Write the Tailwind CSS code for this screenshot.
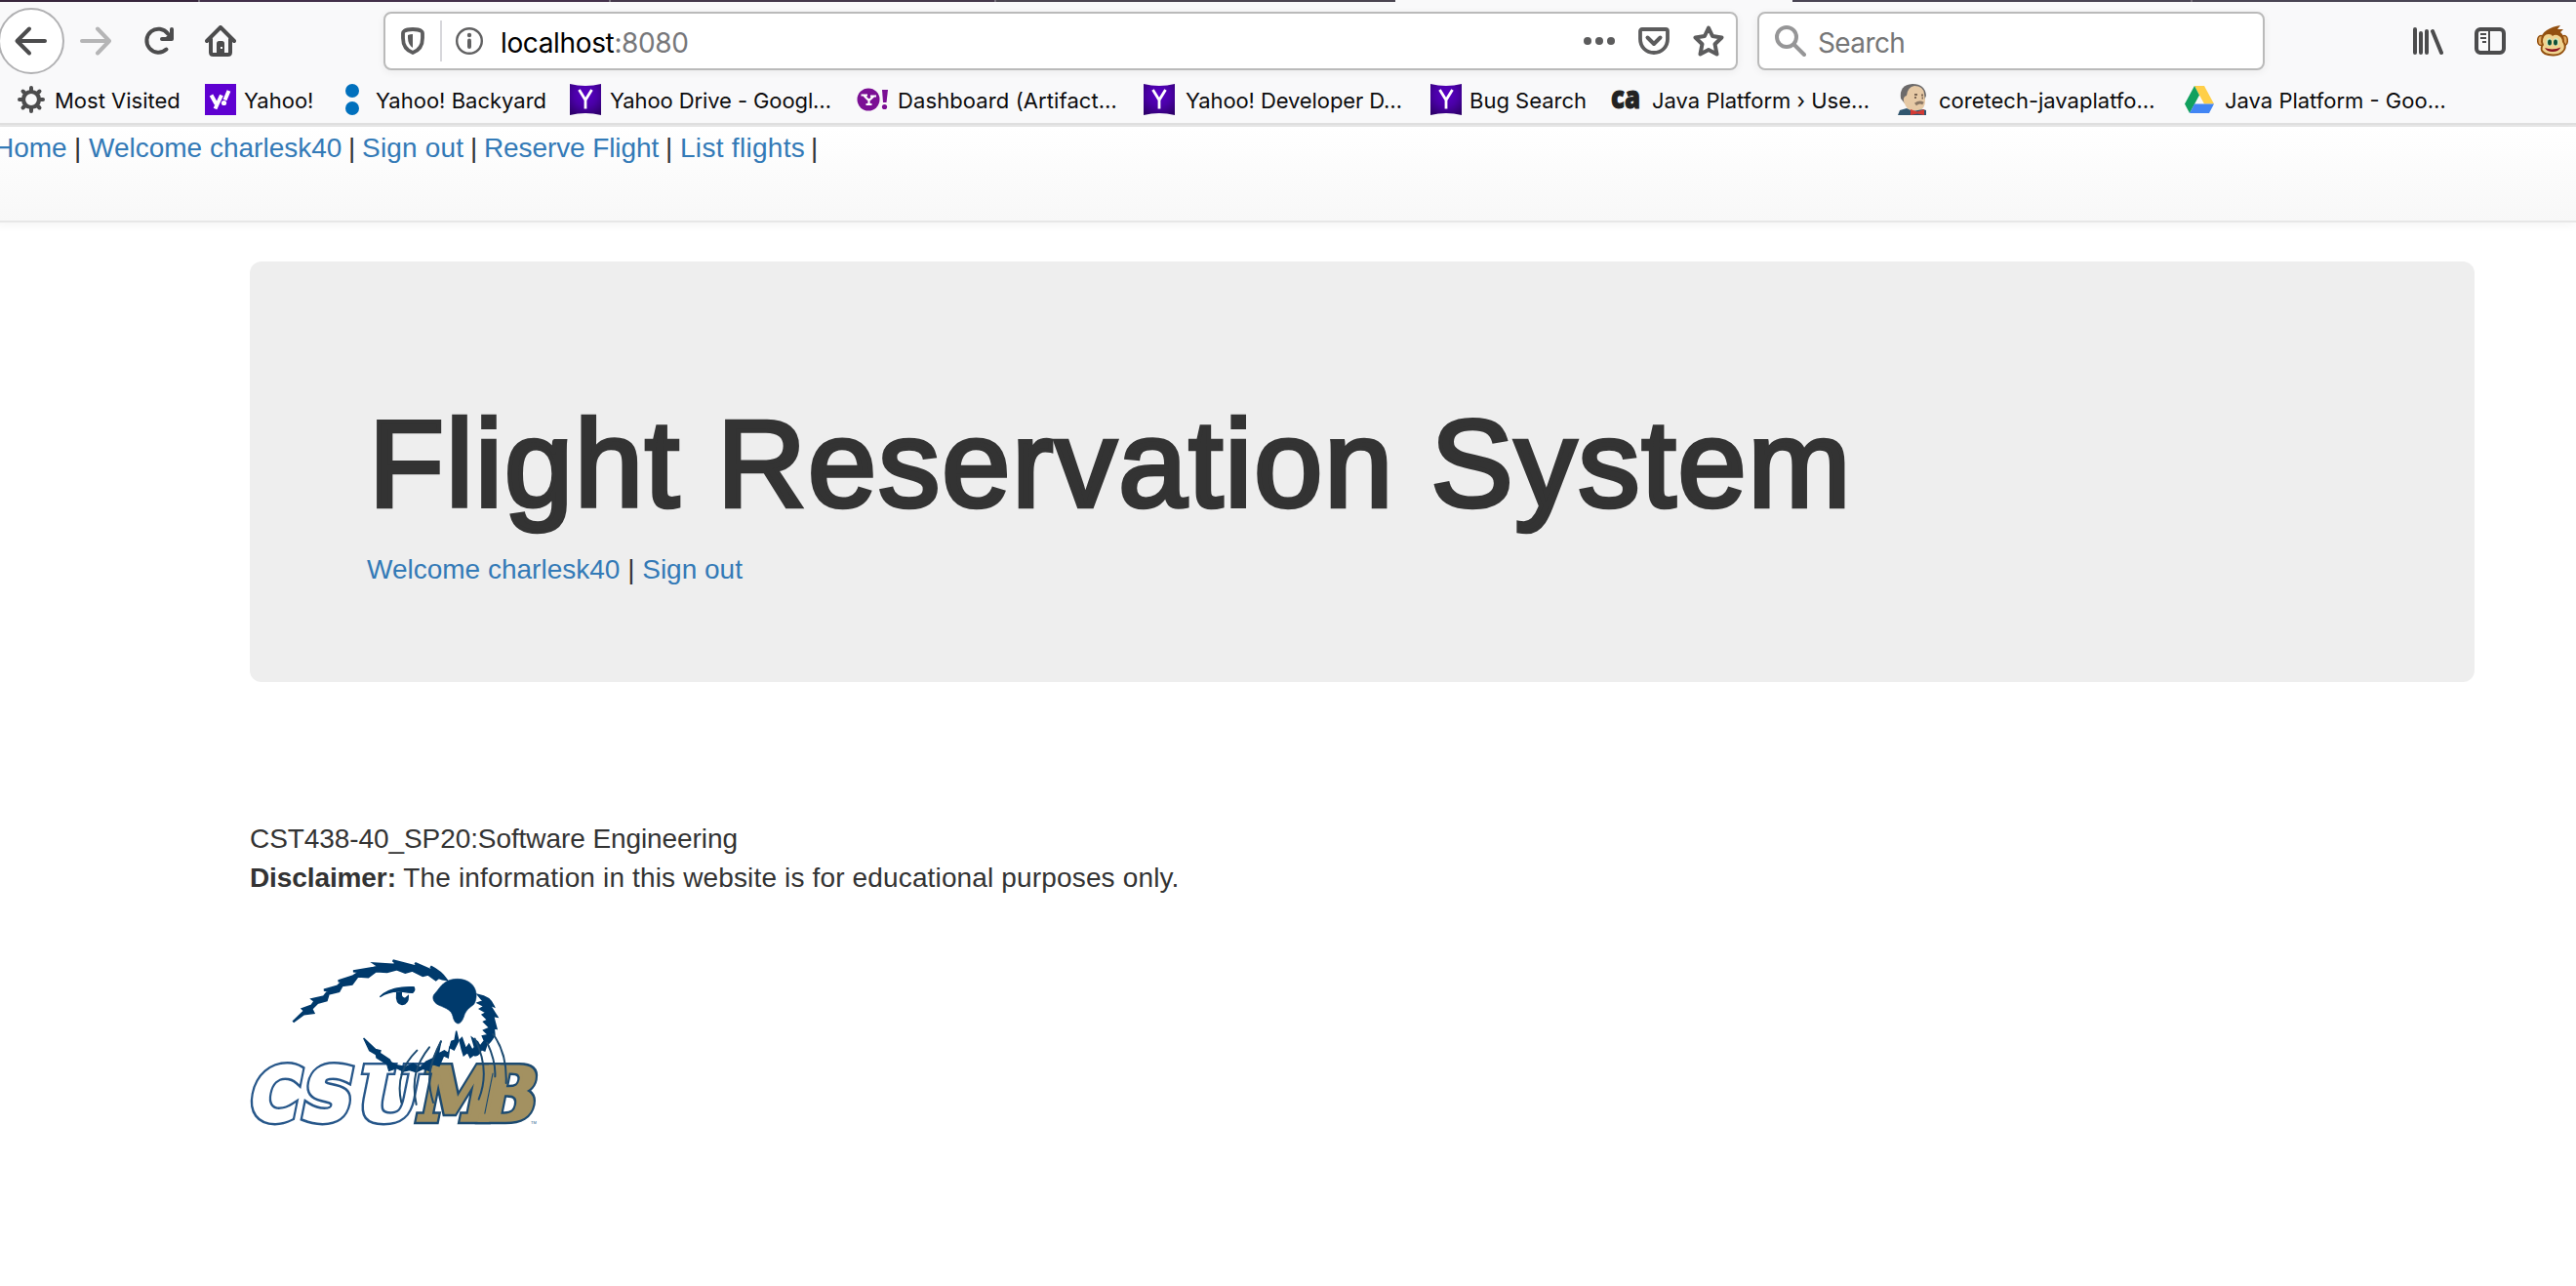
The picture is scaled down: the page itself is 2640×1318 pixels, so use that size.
<!DOCTYPE html>
<html lang="en">
<head>
<meta charset="utf-8">
<title>Flight Reservation System</title>
<script src="https://cdn.jsdelivr.net/npm/@tailwindcss/browser@4"></script>
</head>
<body class="w-[2640px] h-[1318px] overflow-hidden bg-white font-['Liberation_Sans',Arial,sans-serif] text-[28px] text-[#333]">

<!-- shared gradient and the purple Y bookmark icon -->
<svg width="0" height="0" class="absolute">
  <defs>
    <radialGradient id="yg" cx=".5" cy=".35" r=".75"><stop offset="0" stop-color="#5a00c8"/><stop offset=".5" stop-color="#4a00a6"/><stop offset="1" stop-color="#2d0068"/></radialGradient>
    <symbol id="y" viewBox="0 0 32 32"><path d="M0 0Q16 4 32 0V32Q16 28 0 32Z" fill="url(#yg)"/><path d="M9.500 6L16 16.500L22.500 6M16 16V25.500" fill="none" stroke="#fff" stroke-width="2.800"/></symbol>
  </defs>
</svg>

<header class="h-[126px] bg-[#f9f9fa] font-[Inter,sans-serif] text-[#0c0c0d]">
  <!-- bottom edge of the tab strip; the gap is the active tab -->
  <div class="flex h-[2px]">
    <div class="w-[203px] bg-[#38263c]"></div><div class="w-[2px] bg-[#77707c]"></div>
    <div class="w-[419px] bg-[#43304a]"></div><div class="w-[2px] bg-[#77707c]"></div>
    <div class="w-[393px] bg-[#45384b]"></div><div class="w-[2px] bg-[#77707c]"></div>
    <div class="w-[409px] bg-[#4b4551]"></div><div class="w-[407px]"></div>
    <div class="w-[408px] bg-[#4a4554]"></div><div class="w-[2px] bg-[#77707c]"></div>
    <div class="flex-1 bg-[#4a4554]"></div>
  </div>

  <!-- toolbar -->
  <div class="flex h-[80px] items-center">
    <svg class="-ml-[2px] shrink-0" width="68" height="68" viewBox="0 0 68 68"><circle cx="34" cy="34" r="33" fill="#fff" stroke="#b1b1b3" stroke-width="2"/><path d="M48 34H20M32 21.500L19.500 34L32 46.500" fill="none" stroke="#4c4c4d" stroke-width="4" stroke-linecap="round" stroke-linejoin="round"/></svg>
    <svg class="ml-4 shrink-0" width="32" height="32" viewBox="0 0 32 32" fill="none" stroke="#b5b5b6" stroke-width="4" stroke-linecap="round" stroke-linejoin="round"><path d="M2 16H29M18 3.500L30 16L18 28.500"/></svg>
    <svg class="ml-8 shrink-0" width="32" height="32" viewBox="0 0 32 32"><path d="M26 8.500A12 12 0 1 0 24.500 24.500" fill="none" stroke="#4c4c4d" stroke-width="4" stroke-linecap="round"/><path d="M30 4V14H20" fill="none" stroke="#4c4c4d" stroke-width="4" stroke-linecap="round" stroke-linejoin="round"/><path d="M30 6V14H22Z" fill="#4c4c4d"/></svg>
    <svg class="ml-8 shrink-0" width="32" height="32" viewBox="0 0 32 32"><path d="M2 16L16 2L30 16M6 14V27.500Q6 30 8.500 30H23.500Q26 30 26 27.500V14" fill="none" stroke="#4c4c4d" stroke-width="4" stroke-linecap="round" stroke-linejoin="round"/><path d="M12 30V18.500Q12 16 14.500 16H17.500Q20 16 20 18.500V30Z" fill="#4c4c4d"/><rect x="16" y="22" width="2" height="2" fill="#f9f9fa"/></svg>

    <!-- address bar -->
    <div class="ml-[151px] flex h-[60px] w-[1388px] shrink-0 items-center rounded-lg border-2 border-[#bababa] bg-white shadow-[0_2px_8px_rgba(0,0,0,0.06)]">
      <svg class="ml-4 shrink-0" width="24" height="28" viewBox="0 0 24 28"><path d="M12 2C8.500 2 5 2.600 3 4C2.200 4.500 2 5 2 6V11C2 19 6.500 24 12 26C17.500 24 22 19 22 11V6C22 5 21.800 4.500 21 4C19 2.600 15.500 2 12 2Z" fill="none" stroke="#5c5c5d" stroke-width="3.800"/><path d="M12 7V21C9 19 7 15.500 7 11V8Q9 7 12 7Z" fill="#5c5c5d"/></svg>
      <div class="ml-4 h-[42px] w-[2px] bg-[#d7d7db]"></div>
      <svg class="ml-[14px] shrink-0" width="28" height="28" viewBox="0 0 28 28"><circle cx="14" cy="14" r="12.800" fill="none" stroke="#616162" stroke-width="2.400"/><circle cx="14" cy="8" r="2.200" fill="#616162"/><path d="M14 13.500V20" stroke="#616162" stroke-width="4" stroke-linecap="round"/></svg>
      <div class="ml-[18px] mt-[3px] text-[28px] leading-none tracking-[-0.36px] text-black">localhost<span class="text-[#77777a]">:8080</span></div>
      <svg class="ml-auto shrink-0" width="32" height="32" viewBox="0 0 32 32" fill="#5c5c5d"><circle cx="4" cy="16" r="4"/><circle cx="16" cy="16" r="4"/><circle cx="28" cy="16" r="4"/></svg>
      <svg class="ml-6 shrink-0" width="32" height="28" viewBox="0 0 32 28" fill="none" stroke="#5c5c5d" stroke-width="3.800" stroke-linecap="round" stroke-linejoin="round"><path d="M4 2H28Q30 2 30 4V12C30 20 24 26 16 26C8 26 2 20 2 12V4Q2 2 4 2Z"/><path d="M9.500 10.500L16 17L22.500 10.500" stroke-width="4"/></svg>
      <svg class="ml-6 mr-3 shrink-0" width="32" height="32" viewBox="0 0 32 32"><path d="M16 2.500L20 11L29.500 12.500L22.500 19.200L24.500 29.500L16 25L7.500 29.500L9.500 19.200L2.500 12.500L12 11Z" fill="none" stroke="#5c5c5d" stroke-width="4" stroke-linejoin="round"/></svg>
    </div>

    <!-- search box -->
    <div class="ml-5 flex h-[60px] w-[520px] shrink-0 items-center rounded-lg border-2 border-[#bababa] bg-white shadow-[0_2px_8px_rgba(0,0,0,0.06)]">
      <svg class="ml-4 shrink-0" width="32" height="32" viewBox="0 0 32 32" fill="none" stroke="#969697" stroke-width="4" stroke-linecap="round"><circle cx="12" cy="12" r="10"/><path d="M20 20L30 30"/></svg>
      <div class="ml-[12px] mt-[3px] text-[28px] leading-none tracking-[-0.6px] text-[#767677]">Search</div>
    </div>

    <svg class="ml-[151px] shrink-0" width="32" height="28" viewBox="0 0 32 28" stroke="#4c4c4d" stroke-width="4" stroke-linecap="round"><path d="M3 2V26M9 6V26M15 4V26M21 4L30 26"/></svg>
    <svg class="ml-[32px] shrink-0" width="32" height="28" viewBox="0 0 32 28"><rect x="2" y="2" width="28" height="24" rx="4" fill="none" stroke="#4c4c4d" stroke-width="4"/><path d="M15 3V25M6 7H12M6 11H12M8 15H12" stroke="#4c4c4d" stroke-width="2"/></svg>
    <svg class="ml-8 shrink-0" width="32" height="32" viewBox="0 0 32 32"><ellipse cx="4" cy="15.500" rx="3.300" ry="5" fill="#e0a860" stroke="#93500f" stroke-width="1.600"/><ellipse cx="28" cy="15.500" rx="3.300" ry="5" fill="#e0a860" stroke="#93500f" stroke-width="1.600"/><path d="M4 17Q4 8 10 5Q16 1 24 0L21 4L27 4L24 7Q28 10 28 17Q31 20 29 25Q25 32 16 31.500Q6 31 4 26Q3 22 5 20Z" fill="#93500f"/><path d="M6 17Q6 9 12 9Q15 9 16 11Q18 9 21 10Q26 12 26 17Q29 21 27 25Q23 30 16 29.500Q8 29 5.500 25Q5 22 7 20Z" fill="#f0d490"/><ellipse cx="12.500" cy="17" rx="2.800" ry="4" fill="#cfe8c0"/><ellipse cx="19.500" cy="17" rx="2.800" ry="4" fill="#cfe8c0"/><ellipse cx="13" cy="17.500" rx="2" ry="3" fill="#0e5136"/><ellipse cx="19" cy="17.500" rx="2" ry="3" fill="#0e5136"/><path d="M8 23Q16 26 24.500 22.500Q22 27 16 27Q10 27 8 23Z" fill="#8b1420"/></svg>
  </div>

  <!-- bookmarks -->
  <nav class="flex h-[40px] items-center pl-4 text-[22px] leading-[28px] whitespace-nowrap [&_span]:pt-[2px]">
    <div class="flex w-[194px] items-center gap-[8px]"><svg class="shrink-0" width="32" height="32" viewBox="0 0 32 32" stroke="#4c4c4d" fill="none"><circle cx="16" cy="16" r="8" stroke-width="4.200"/><path d="M16 4V7M16 25V28M4 16H7M25 16H28M7.500 7.500L9.500 9.500M22.500 22.500L24.500 24.500M7.500 24.500L9.500 22.500M22.500 9.500L24.500 7.500" stroke-width="4" stroke-linecap="round"/></svg><span>Most Visited</span></div>
    <div class="flex w-[135px] items-center gap-[8px]"><svg class="shrink-0" width="32" height="32" viewBox="0 0 32 32"><rect width="32" height="32" fill="#5f01d1"/><path d="M6.500 11.500L11.500 20.500M17 11.500L10.500 25.500M24.500 7L20.500 16.500" fill="none" stroke="#fff" stroke-width="4"/><circle cx="19.500" cy="19.500" r="2.600" fill="#fff"/></svg><span>Yahoo!</span></div>
    <div class="flex w-[239px] items-center gap-[8px]"><svg class="shrink-0" width="32" height="32" viewBox="0 0 32 32" fill="#0070bd"><circle cx="16" cy="7" r="7"/><circle cx="16" cy="25" r="7"/></svg><span>Yahoo! Backyard</span></div>
    <div class="flex w-[294px] items-center gap-[9px]"><svg class="shrink-0" width="32" height="32"><use href="#y"/></svg><span class="tracking-[-0.1px]">Yahoo Drive - Googl…</span></div>
    <div class="flex w-[294px] items-center gap-[10px]"><svg class="shrink-0" width="32" height="32" viewBox="0 0 32 32"><circle cx="12" cy="16" r="11.500" fill="#7b0f94"/><path d="M4.500 11.500H11M14 12.500H20M7.500 12L12.500 17L17.500 12.500M12.500 16.500V20.500M9.500 21H15.500" fill="none" stroke="#fff" stroke-width="2.200"/><path d="M26 6H32L30.500 19H27Z" fill="#7b0f94"/><circle cx="28.500" cy="23.500" r="2.600" fill="#7b0f94"/></svg><span class="tracking-[0.1px]">Dashboard (Artifact…</span></div>
    <div class="flex w-[294px] items-center gap-[11px]"><svg class="shrink-0" width="32" height="32"><use href="#y"/></svg><span class="tracking-[-0.1px]">Yahoo! Developer D…</span></div>
    <div class="flex w-[184px] items-center gap-[8px]"><svg class="shrink-0" width="32" height="32"><use href="#y"/></svg><span>Bug Search</span></div>
    <div class="flex w-[295px] items-center gap-[11px]"><svg class="shrink-0 overflow-visible" width="32" height="32" viewBox="0 0 32 32"><text x="1" y="25" font-family="Open Sans" font-weight="800" font-size="32" textLength="30" lengthAdjust="spacingAndGlyphs" fill="#222" stroke="#222" stroke-width="1">ca</text></svg><span>Java Platform › Use…</span></div>
    <div class="flex w-[293px] items-center gap-[10px]"><svg class="shrink-0" width="32" height="32" viewBox="0 0 32 32"><path d="M3 15Q1 1 15 0Q28 0 29 12L27 17L7 20Z" fill="#6c6a6a"/><path d="M9 12Q10 3 17 2Q26 2 27 10L28 17Q28 26 21 28L11 27Q7 22 6 18Q5 13 9 12Z" fill="#e6c9a5"/><path d="M17 11H20M24 11.500H26M17 14H19M24.500 14.500H26" stroke="#7b6552" stroke-width="1.800"/><path d="M18 21Q22 17.500 26 20" stroke="#8b7865" stroke-width="3" fill="none"/><path d="M0 32L2 27L9 25L15 28L26 26L29 27V32Z" fill="#31566f"/><path d="M13 26L20 28.500L27 26V32L20 30.500L13 32Z" fill="#d33a34"/></svg><span>coretech-javaplatfo…</span></div>
    <div class="flex items-center gap-[10px]"><svg class="shrink-0" width="32" height="32" viewBox="0 0 32 32"><path d="M11 2H21L31 20.500H21Z" fill="#ffcf48"/><path d="M11 2L16 11.500L6 30L1 20.500Z" fill="#11a05e"/><path d="M11 20.500H31L26 30H6Z" fill="#4285f4"/></svg><span>Java Platform - Goo…</span></div>
  </nav>
</header>
<div class="h-[4px] border-t-2 border-[#e0e0e0] bg-[#e9e9e9]"></div>

<!-- page navigation, scrolled slightly past the left edge -->
<nav class="-ml-[6px] h-[98px] border-b-2 border-[#e7e7e7] bg-linear-to-b from-white to-[#f8f8f8] pt-[2px] leading-[40px] whitespace-nowrap shadow-[0_2px_10px_rgba(0,0,0,0.05)]">
  <div class="flex">
    <a class="w-[82px] text-[#337ab7]">Home</a><span class="w-[15px]">|</span>
    <a class="w-[266px] text-[#337ab7]">Welcome charlesk40</a><span class="w-[14px]">|</span>
    <a class="w-[111px] tracking-[0.2px] text-[#337ab7]">Sign out</a><span class="w-[14px]">|</span>
    <a class="w-[186px] tracking-[-0.1px] text-[#337ab7]">Reserve Flight</a><span class="w-[15px]">|</span>
    <a class="w-[134px] tracking-[0.3px] text-[#337ab7]">List flights</a><span>|</span>
  </div>
</nav>

<main class="mt-10 ml-64 w-[2280px]">
  <section class="h-[431px] rounded-xl bg-[#eee] px-[120px] pt-[138px]">
    <h1 class="ml-[2px] h-[150px] text-[126px] leading-[139px] tracking-[2px] whitespace-nowrap [-webkit-text-stroke:4.500px_#333]">Flight Reservation System</h1>
    <p class="mt-[8px] leading-[40px]"><a class="text-[#337ab7]">Welcome charlesk40</a> | <a class="text-[#337ab7]">Sign out</a></p>
  </section>
  <footer class="mt-[141px] leading-[40px] whitespace-nowrap">
    <p class="tracking-[-0.080px]">CST438-40_SP20:Software Engineering</p>
    <p class="tracking-[0.150px]"><b class="tracking-[-0.100px]">Disclaimer:</b> The information in this website is for educational purposes only.</p>
    <svg class="mt-[64px] overflow-visible" width="300" height="170" viewBox="48 72 900 510">
      <!-- each letter is laid down twice: a wide outline, then a narrower fill over it -->
      <g font-weight="bold" font-size="225" stroke-linejoin="miter">
        <g font-family="DejaVu Sans">
          <text transform="matrix(.9 0 -.2 1 38 563)" fill="#27578a" stroke="#27578a" stroke-width="26">C</text>
          <text transform="matrix(.9 0 -.2 1 38 563)" fill="#fff" stroke="#fff" stroke-width="11">C</text>
          <text transform="matrix(.95 0 -.2 1 198 563)" fill="#27578a" stroke="#27578a" stroke-width="26">S</text>
          <text transform="matrix(.95 0 -.2 1 198 563)" fill="#fff" stroke="#fff" stroke-width="11">S</text>
        </g>
        <g font-family="DejaVu Serif">
          <text transform="matrix(.97 0 -.2 1 366 563)" fill="#27578a" stroke="#27578a" stroke-width="26">U</text>
          <text transform="matrix(.97 0 -.2 1 366 563)" fill="#fff" stroke="#fff" stroke-width="11">U</text>
          <text transform="matrix(.93 0 -.2 1 557 563)" fill="#1c4a70" stroke="#1c4a70" stroke-width="26">M</text>
          <text transform="matrix(.9 0 -.2 1 745 563)" fill="#1c4a70" stroke="#1c4a70" stroke-width="26">B</text>
          <text transform="matrix(.93 0 -.2 1 557 563)" fill="#a39161" stroke="#a39161" stroke-width="11">M</text>
          <text transform="matrix(.9 0 -.2 1 745 563)" fill="#a39161" stroke="#a39161" stroke-width="11">B</text>
        </g>
      </g>
      <text x="912" y="577" font-size="12" fill="#27578a" font-family="Liberation Sans">TM</text>
      <g fill="#003a6c" stroke="#003a6c" stroke-width="2">
        <path stroke-width="7" d="M181 262L216 228L210 222L238 212L248 198L240 192L276 184L290 166L276 164L318 152L332 138L320 136L364 122L386 108L366 106L428 96L444 92L430 82L488 86L500 84L488 73L560 92L566 92L556 81L604 102L614 104L604 92Q636 108 652 132L640 130L628 126L620 133L596 116L580 120L548 104L526 110L500 100L470 108L436 106L412 124L380 122L362 146L332 150L322 168L290 176L284 196L256 204L238 222L244 234L214 238Z"/>
        <path d="M648 141C668 126 706 126 727 143C748 160 748 190 737 208C722 220 712 226 706 246Q698 268 687 267Q676 264 672 244C668 226 652 220 630 211C610 202 608 184 616 176C628 164 634 150 648 141Z"/>
        <path stroke-width="4" d="M448 185Q480 152 552 155Q558 166 548 172Q534 172 520 169Q480 164 448 185Z"/>
        <path stroke-width="4" d="M500 172Q496 206 516 209Q536 206 535 182L526 190Q512 188 514 172Z"/>
        <path stroke-width="6" d="M750 179Q786 184 798 214L784 208L808 246L796 244L806 282L798 280L800 302Q788 324 776 332L770 350L760 346Q748 372 736 362L726 370L718 354L706 364L700 344L694 318L700 312L712 346L722 332L732 350L740 340L732 312L748 324L756 338L770 320L764 306L782 302L768 288L786 280L768 262L780 256L764 240L776 234L756 222L770 214L750 204L766 198Z"/>
        <path stroke-width="4" d="M398 312L434 346L450 350L448 358L478 378L482 386L502 396L528 400L550 390L572 402L590 384L612 374L636 320L628 360L646 350L658 358L668 322L678 318L683 290L690 320L676 348L662 340L658 372L644 366L630 398L610 392L600 412L580 406L560 416L540 410L520 414L500 404L476 412L470 392L438 372L436 362L416 350Z"/>
      </g>
      <g fill="none" stroke="#1c4a70" stroke-width="6" stroke-linecap="round">
        <path d="M562 350C520 392 498 440 514 510M600 340C560 390 544 440 560 516M636 322C600 390 590 440 612 510M740 314C768 370 780 430 752 500M778 326C798 370 804 400 802 430M796 300C830 346 838 400 836 450"/>
      </g>
    </svg>
  </footer>
</main>
</body>
</html>
